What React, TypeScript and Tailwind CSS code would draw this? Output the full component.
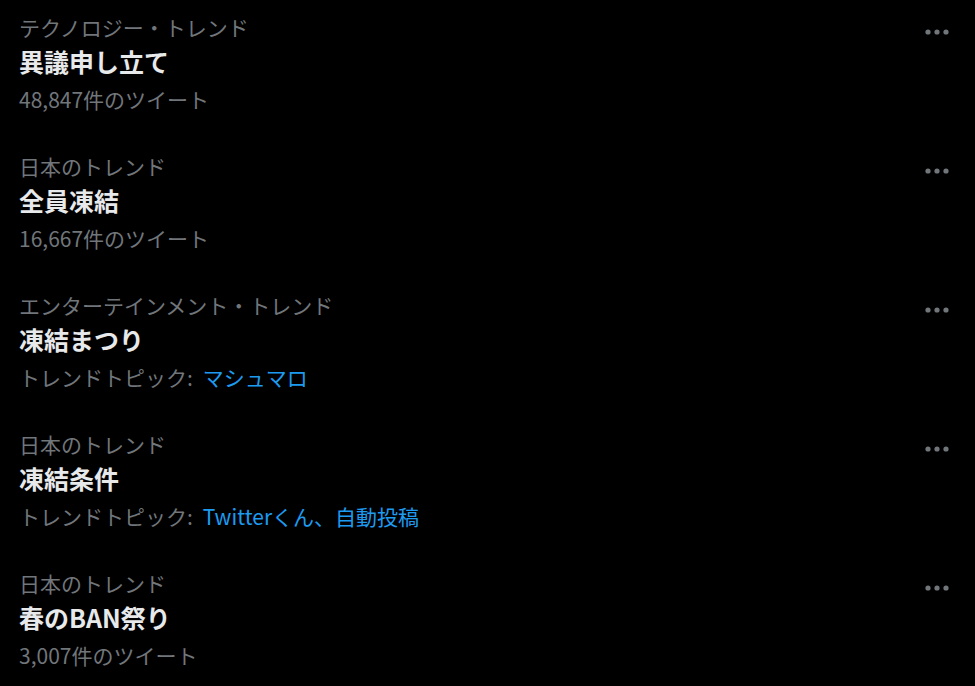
import React from 'react';

type Trend = {
  category: string;
  title: string;
  count?: string;
  topics?: string;
};

const trends: Trend[] = [
  { category: 'テクノロジー・トレンド', title: '異議申し立て', count: '48,847件のツイート' },
  { category: '日本のトレンド', title: '全員凍結', count: '16,667件のツイート' },
  { category: 'エンターテインメント・トレンド', title: '凍結まつり', topics: 'マシュマロ' },
  { category: '日本のトレンド', title: '凍結条件', topics: 'Twitterくん、自動投稿' },
  { category: '日本のトレンド', title: '春のBAN祭り', count: '3,007件のツイート' },
];

const MoreDots: React.FC = () => (
  <svg width="26" height="8" viewBox="0 0 26 8" className="text-[#71767b]">
    <circle cx="4" cy="4" r="2.6" fill="currentColor" />
    <circle cx="13" cy="4" r="2.6" fill="currentColor" />
    <circle cx="22" cy="4" r="2.6" fill="currentColor" />
  </svg>
);

const TrendItem: React.FC<{ trend: Trend }> = ({ trend }) => (
  <div className="flex justify-between pl-[19px] pr-[25px] pt-[10px] pb-[23px]">
    <div className="flex flex-col">
      <div className="text-[21px] leading-[34px] text-[#71767b]">{trend.category}</div>
      <div className="text-[25px] leading-[34px] font-bold text-[#e7e9ea]">{trend.title}</div>
      {trend.count && (
        <div className="mt-1 text-[21px] leading-[34px] text-[#71767b]">{trend.count}</div>
      )}
      {trend.topics && (
        <div className="mt-1 text-[21px] leading-[34px] text-[#71767b]">
          トレンドトピック:<span className="ml-[10px] text-[#1d9bf0]">{trend.topics}</span>
        </div>
      )}
    </div>
    <div className="pt-[18px]">
      <MoreDots />
    </div>
  </div>
);

const App: React.FC = () => {
  return (
    <div
      className="min-h-screen w-full bg-black"
      style={{ fontFamily: '"Noto Sans CJK JP", "Noto Sans", sans-serif' }}
    >
      {trends.map((t, i) => (
        <TrendItem key={i} trend={t} />
      ))}
    </div>
  );
};

export default App;
